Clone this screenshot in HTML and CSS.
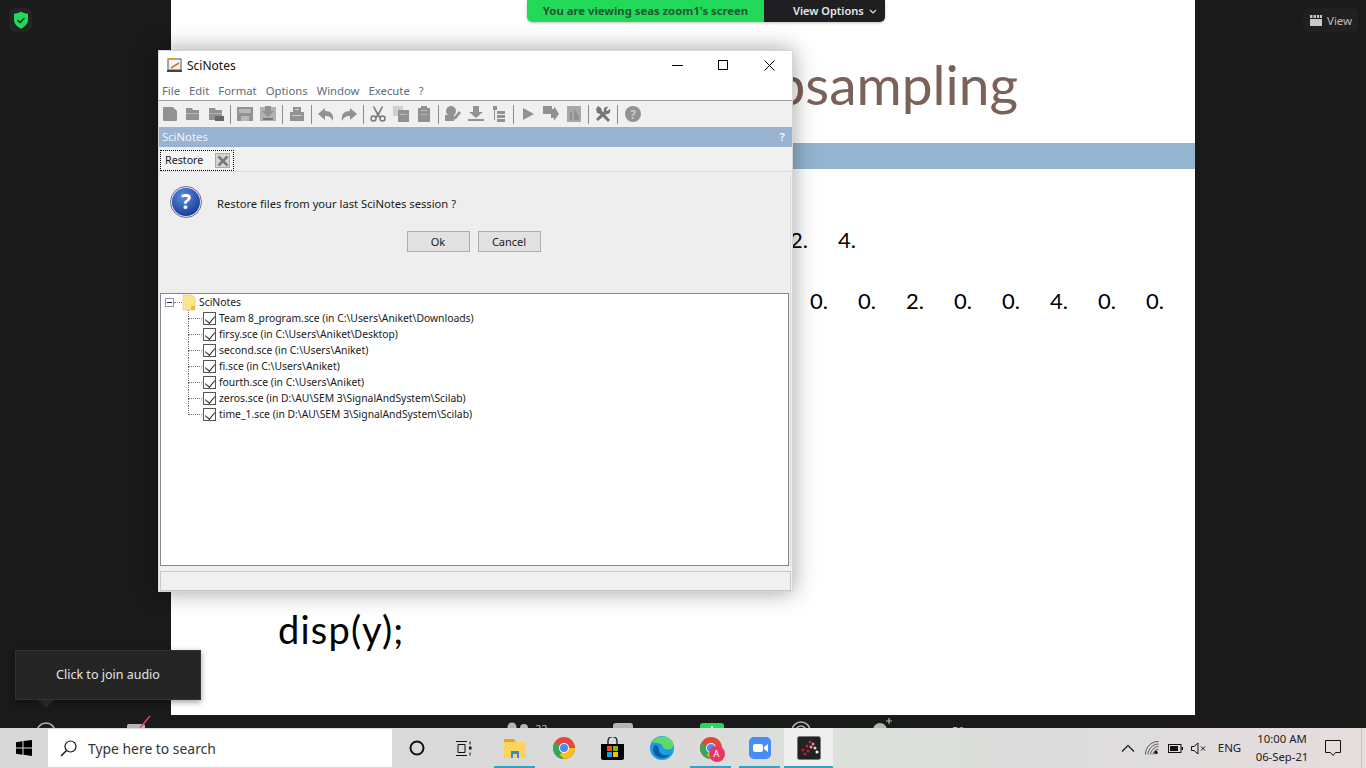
FILE: index.html
```html
<!DOCTYPE html>
<html lang="en">
<head>
  <meta charset="UTF-8">
  <title>SciNotes - Zoom screen share</title>
  <link rel="stylesheet" href="styles.css">
</head>
<body>
  <div class="screen">
    <div class="slide">
      <div class="slide-title">Upsampling</div>
      <div class="slide-band"></div>
      <div class="values values-first"><span>2.</span><span>4.</span></div>
      <div class="values values-second">
        <span>0.</span><span>0.</span><span>2.</span><span>0.</span><span>0.</span><span>4.</span><span>0.</span><span>0.</span>
      </div>
      <div class="slide-code">disp(y);</div>
    </div>

    <svg class="zoom-strip" width="1366" height="13" viewBox="0 0 1366 13">
      <circle cx="46" cy="17" r="9" fill="none" stroke="#b5b5b5" stroke-width="1.5"/>
      <rect x="127" y="9" width="18" height="8" rx="2" fill="#b5b5b5"/>
      <path d="M140 13 L150 1" stroke="#e5484d" stroke-width="1.5"/>
      <circle cx="512" cy="12" r="4.5" fill="#b5b5b5"/>
      <circle cx="524" cy="13" r="4" fill="#b5b5b5"/>
      <text x="535" y="18" class="zoom-count">22</text>
      <rect x="613" y="8" width="20" height="10" rx="3" fill="#b5b5b5"/>
      <rect x="700" y="8" width="24" height="10" rx="3" fill="#23d959"/>
      <rect x="711" y="11" width="2" height="3" fill="#fff"/>
      <circle cx="801" cy="16" r="9" fill="none" stroke="#b5b5b5" stroke-width="1.5"/>
      <circle cx="801" cy="16" r="5" fill="none" stroke="#b5b5b5" stroke-width="1.5"/>
      <circle cx="880" cy="15" r="7" fill="#b5b5b5"/>
      <path d="M889 3v6M886 6h6" stroke="#b5b5b5" stroke-width="1.2"/>
      <text x="952" y="20" class="zoom-count">50</text>
    </svg>

    <div class="top-banner">
      <div class="banner-status">You are viewing seas zoom1's screen</div>
      <div class="banner-options">View Options
        <svg width="8" height="5" viewBox="0 0 8 5"><path d="M1 1l3 3 3-3" fill="none" stroke="#ddd" stroke-width="1.2"/></svg>
      </div>
    </div>

    <div class="shield-tile">
      <svg width="16" height="18" viewBox="0 0 16 18">
        <path d="M8 0.5c2 1.5 4.500 2 7 2.200v6c0 4-3 7-7 9-4-2-7-5-7-9v-6c2.500-.2 5-.7 7-2.200z" fill="#23d959"/>
        <path d="M4.500 9l2.500 2.500 4.500-4.500" fill="none" stroke="#1c3a26" stroke-width="1.700"/>
      </svg>
    </div>

    <div class="view-button">
      <svg width="12" height="11" viewBox="0 0 12 11"><path d="M0 4h12v7H0zM0 0h2.500v3H0zM3.500 0h2.500v3H3.500zM7 0h2.200v3H7zM10 0h2v3h-2z" fill="#c8c8c8"/></svg>
      View
    </div>

    <div class="tooltip">Click to join audio</div>

    <div class="window">
      <div class="title-bar">
        <svg class="app-icon" width="16" height="16" viewBox="0 0 16 16">
          <rect x="1" y="2" width="13" height="11" fill="#f4f4f4" stroke="#555"/>
          <rect x="1" y="1" width="8" height="2" fill="#d9a520"/>
          <rect x="0" y="13" width="15" height="2" fill="#444"/>
          <path d="M4 11l8-5" stroke="#d9731a" stroke-width="1.500"/>
        </svg>
        <span class="title-text">SciNotes</span>
        <div class="window-controls">
          <svg width="11" height="11" viewBox="0 0 11 11"><path d="M0 5.500h11" stroke="#000"/></svg>
          <svg width="11" height="11" viewBox="0 0 11 11"><rect x=".5" y=".5" width="9" height="9" fill="none" stroke="#000"/></svg>
          <svg width="11" height="11" viewBox="0 0 11 11"><path d="M.5.500l10 10M10.500.500l-10 10" stroke="#000"/></svg>
        </div>
      </div>

      <div class="menu-bar">
        <span>File</span><span>Edit</span><span>Format</span><span>Options</span><span>Window</span><span>Execute</span><span>?</span>
      </div>

      <div class="tool-bar">
        <div class="tool"><svg viewBox="0 0 16 16"><path d="M1 2a1 1 0 0 1 1-1h9l4 4v9a1 1 0 0 1-1 1H2a1 1 0 0 1-1-1z"/></svg></div>
        <div class="tool"><svg viewBox="0 0 16 16"><path d="M1 2h6l1 2h6v10H1z"/><rect x="1" y="7" width="13" height="1" fill="#b4b4b4"/></svg></div>
        <div class="tool"><svg viewBox="0 0 16 16"><path d="M1 2h6l1 2h6v10H1z"/><rect x="1" y="7" width="13" height="1" fill="#b4b4b4"/><rect x="7" y="10" width="9" height="5" fill="#666"/></svg></div>
        <div class="tool-sep"></div>
        <div class="tool"><svg viewBox="0 0 16 16"><path d="M0 1h16v14H0z"/><rect x="2" y="3" width="12" height="4" fill="#b8b8b8"/><rect x="4" y="10" width="8" height="5" fill="#b8b8b8"/></svg></div>
        <div class="tool"><svg viewBox="0 0 16 16"><path d="M0 1h16v14H0z" fill="#b0b0b0"/><path d="M5 0h6v5h3l-6 6-6-6h3z"/><rect x="3" y="12" width="10" height="2" fill="#777"/></svg></div>
        <div class="tool-sep"></div>
        <div class="tool"><svg viewBox="0 0 16 16"><path d="M4 1h8v5h3v9H1V6h3z"/><rect x="6" y="3" width="4" height="1" fill="#ccc"/><rect x="3" y="9" width="10" height="1" fill="#ccc"/></svg></div>
        <div class="tool-sep"></div>
        <div class="tool"><svg viewBox="0 0 16 16"><path d="M7 2L0 8l7 6v-4c4 0 6 1 8 5 1-7-2-10-8-10z"/></svg></div>
        <div class="tool"><svg viewBox="0 0 16 16"><path d="M9 2l7 6-7 6v-4c-4 0-6 1-8 5-1-7 2-10 8-10z"/></svg></div>
        <div class="tool-sep"></div>
        <div class="tool"><svg viewBox="0 0 16 16"><path d="M4 0l4 7 4-7 1 1-4 8 2 2-2 1-1-2-1 2-2-1 2-2-4-8z" fill="#777"/><circle cx="3.500" cy="12.500" r="2.500" fill="none" stroke="#777" stroke-width="1.500"/><circle cx="12.500" cy="12.500" r="2.500" fill="none" stroke="#777" stroke-width="1.500"/></svg></div>
        <div class="tool"><svg viewBox="0 0 16 16"><rect x="0" y="0" width="10" height="10" fill="#d0d0d0"/><rect x="5" y="4" width="11" height="12"/><rect x="7" y="8" width="7" height="1" fill="#bbb"/></svg></div>
        <div class="tool"><svg viewBox="0 0 16 16"><path d="M2 2h3V0h6v2h3v14H2z"/><rect x="5" y="4" width="6" height="1" fill="#bbb"/><rect x="5" y="8" width="6" height="1" fill="#bbb"/></svg></div>
        <div class="tool-sep"></div>
        <div class="tool"><svg viewBox="0 0 16 16"><circle cx="6" cy="5" r="5"/><path d="M0 9h9v6H0zM9 11l5-6 2 2-5 6-3 1z"/></svg></div>
        <div class="tool"><svg viewBox="0 0 16 16"><path d="M5 0h6v6h4l-7 6-7-6h4zM0 13h16v2H0z"/></svg></div>
        <div class="tool"><svg viewBox="0 0 16 16"><path d="M2 0h4v4H2zM3 4h1v10H3zM6 5h8v3H6zM6 9h8v3H6zM6 13h8v3H6z"/></svg></div>
        <div class="tool-sep"></div>
        <div class="tool"><svg viewBox="0 0 16 16"><path d="M3 2l11 6-11 6z"/></svg></div>
        <div class="tool"><svg viewBox="0 0 16 16"><path d="M0 0h9v3h2V0l5 8-5 7v-3H8V8H0z"/></svg></div>
        <div class="tool"><svg viewBox="0 0 16 16"><path d="M1 0h14v16H1z" fill="#a8a8a8"/><path d="M4 14V6h2v8zM8 14V3l5 7v4z"/></svg></div>
        <div class="tool-sep"></div>
        <div class="tool"><svg viewBox="0 0 16 16"><path d="M1 3l2-3 3 2 1 3 8 9-2 2-8-8-3-1z" fill="#777"/><path d="M15 3l-3 2-1-1 2-3c-2-1-5 1-4 4L1 13l2 2 8-7c3 1 5-2 4-5z" fill="#777"/></svg></div>
        <div class="tool-sep tool-sep-wide"></div>
        <div class="tool"><svg viewBox="0 0 16 16"><circle cx="8" cy="8" r="8"/><text x="8" y="12.500" class="help-mark">?</text></svg></div>
      </div>

      <div class="dock-header"><span>SciNotes</span><span class="dock-help">?</span></div>

      <div class="tab-strip">
        <div class="tab">
          <span class="tab-label">Restore</span>
          <span class="tab-close">
            <svg width="12" height="12" viewBox="0 0 12 12"><path d="M1.500 1.500l9 9M10.500 1.500l-9 9" stroke="#777" stroke-width="2.500"/></svg>
          </span>
        </div>
      </div>

      <div class="panel">
        <div class="prompt">
          <div class="question-icon">?</div>
          <span class="prompt-text">Restore files from your last SciNotes session ?</span>
        </div>
        <div class="prompt-actions">
          <button class="btn">Ok</button>
          <button class="btn">Cancel</button>
        </div>

        <div class="tree">
          <div class="tree-root">
            <span class="tree-handle"></span>
            <span class="tree-dash"></span>
            <svg class="folder" width="14" height="17" viewBox="0 0 14 17">
              <path d="M1 1h9l3 3v12H1z" fill="#fde58f" stroke="#e8c860" stroke-width=".6"/>
              <rect x="9" y="12" width="4" height="4" fill="#f3b93c"/>
            </svg>
            <span>SciNotes</span>
          </div>
          <div class="tree-row"><span class="check"></span>Team 8_program.sce (in C:\Users\Aniket\Downloads)</div>
          <div class="tree-row"><span class="check"></span>firsy.sce (in C:\Users\Aniket\Desktop)</div>
          <div class="tree-row"><span class="check"></span>second.sce (in C:\Users\Aniket)</div>
          <div class="tree-row"><span class="check"></span>fi.sce (in C:\Users\Aniket)</div>
          <div class="tree-row"><span class="check"></span>fourth.sce (in C:\Users\Aniket)</div>
          <div class="tree-row"><span class="check"></span>zeros.sce (in D:\AU\SEM 3\SignalAndSystem\Scilab)</div>
          <div class="tree-row tree-last"><span class="check"></span>time_1.sce (in D:\AU\SEM 3\SignalAndSystem\Scilab)</div>
        </div>
      </div>

      <div class="status-bar"></div>
    </div>
  </div>

  <div class="taskbar">
    <div class="start">
      <svg width="16" height="16" viewBox="0 0 16 16"><path d="M0 2.300l6.500-1v6.300H0zM7.500 1.100L16 0v7.600H7.500zM0 8.500h6.500v6.200l-6.500-1zM7.500 8.500H16V16l-8.500-1.200z" fill="#000"/></svg>
    </div>
    <div class="search">
      <svg width="17" height="17" viewBox="0 0 17 17"><circle cx="10.500" cy="6.500" r="5.500" fill="none" stroke="#111" stroke-width="1.200"/><path d="M6.500 10.500L1 16" stroke="#111" stroke-width="1.400"/></svg>
      <span>Type here to search</span>
    </div>

    <div class="task-icon">
      <svg width="16" height="16" viewBox="0 0 16 16"><circle cx="8" cy="8" r="6.500" fill="none" stroke="#111" stroke-width="2"/></svg>
    </div>
    <div class="task-icon task-view">
      <svg width="17" height="15" viewBox="0 0 17 15"><path d="M1 .5h11M1 14.500h11M3 3.500h7v8H3zM15 .5v3M15 11.500v3" fill="none" stroke="#111"/><rect x="14" y="5.500" width="2.500" height="3" fill="#111"/></svg>
    </div>
    <div class="task-icon running">
      <svg width="22" height="19" viewBox="0 0 22 19">
        <path d="M0 0h10l2 3H0z" fill="#e8a61f"/>
        <rect x="0" y="3" width="22" height="16" fill="#fbd35f"/>
        <path d="M7 19v-7h8v7h-2v-4H9v4z" fill="#2f8fd0"/>
      </svg>
    </div>
    <div class="task-icon">
      <svg width="22" height="22" viewBox="0 0 22 22">
        <circle cx="11" cy="11" r="11" fill="#e8453c"/>
        <path d="M1.500 5.500A11 11 0 0 0 11 22 11 11 0 0 0 22 11H11z" fill="#34a853"/>
        <path d="M11 11h11a11 11 0 0 1-11 11l-4-4z" fill="#fbc116"/>
        <circle cx="11" cy="11" r="5" fill="#fff"/>
        <circle cx="11" cy="11" r="4" fill="#4a8af4"/>
      </svg>
    </div>
    <div class="task-icon">
      <svg width="23" height="23" viewBox="0 0 23 23">
        <path d="M0 7h23v14a2 2 0 0 1-2 2H2a2 2 0 0 1-2-2z" fill="#000"/>
        <path d="M7 7V4a4.500 4.500 0 0 1 9 0v3" fill="none" stroke="#111" stroke-width="1.300"/>
        <rect x="6" y="9" width="5" height="5" fill="#f25022"/>
        <rect x="12" y="9" width="5" height="5" fill="#7fba00"/>
        <rect x="6" y="15" width="5" height="5" fill="#00a4ef"/>
        <rect x="12" y="15" width="5" height="5" fill="#ffb900"/>
      </svg>
    </div>
    <div class="task-icon">
      <svg width="24" height="24" viewBox="0 0 24 24">
        <circle cx="12" cy="12" r="12" fill="#1b9de2"/>
        <path d="M2 7C5 0 15-2 21 4c3 3 3 8 0 9-3 1-8 0-8-2 0-3-5-5-11-4z" fill="#5fd86e"/>
        <path d="M9 14c0 4 5 7 11 4-3 4-8 5-12 3-4-2-6-7-4-11 1-2 5-1 5 4z" fill="#0c59a4"/>
      </svg>
    </div>
    <div class="task-icon running">
      <span class="chrome-badged">
        <svg width="22" height="22" viewBox="0 0 22 22">
          <circle cx="11" cy="11" r="11" fill="#e8453c"/>
          <path d="M1.500 5.500A11 11 0 0 0 11 22 11 11 0 0 0 22 11H11z" fill="#34a853"/>
          <path d="M11 11h11a11 11 0 0 1-11 11l-4-4z" fill="#fbc116"/>
          <circle cx="11" cy="11" r="5" fill="#fff"/>
          <circle cx="11" cy="11" r="4" fill="#4a8af4"/>
        </svg>
        <span class="profile-badge">A</span>
      </span>
    </div>
    <div class="task-icon running">
      <svg width="22" height="22" viewBox="0 0 22 22">
        <rect width="22" height="22" rx="5" fill="#4a8cf7"/>
        <rect x="4" y="7" width="10" height="8" rx="2" fill="#fff"/>
        <path d="M15 10l4-3v8l-4-3z" fill="#fff"/>
      </svg>
    </div>
    <div class="task-icon running active">
      <svg width="24" height="24" viewBox="0 0 24 24">
        <rect x=".5" y=".5" width="23" height="23" rx="2" fill="#222" stroke="#777"/>
        <circle cx="13" cy="6" r="1.300" fill="#c4304a"/><circle cx="16" cy="8" r="1.500" fill="#e88"/>
        <circle cx="10" cy="10" r="1.500" fill="#c01f35"/><circle cx="14" cy="11" r="1.500" fill="#e9a"/>
        <circle cx="18" cy="12" r="1.500" fill="#f3c9d0"/><circle cx="6" cy="14" r="1.500" fill="#c01f35"/>
        <circle cx="11" cy="15" r="1.500" fill="#c01f35"/><circle cx="20" cy="16" r="1.500" fill="#fff"/>
        <circle cx="8" cy="18" r="1.500" fill="#c01f35"/>
      </svg>
    </div>

    <div class="tray">
      <div class="tray-item wide">
        <svg width="14" height="8" viewBox="0 0 14 8"><path d="M1 7.500l6-6 6 6" fill="none" stroke="#111" stroke-width="1.100"/></svg>
      </div>
      <div class="tray-item wide">
        <svg width="14" height="14" viewBox="0 0 14 14"><g fill="none" stroke="#555"><path d="M.5 13.500C.5 6 6 .5 13.500.5"/><path d="M3 13.500C3 8 8 3 13.500 3"/><path d="M5.500 13.500C5.500 10 9.500 5.500 13.500 5.500"/><path d="M8 13.500c0-2 2-5 5.500-5"/></g><circle cx="11" cy="11.500" r="1.700" fill="#111"/></svg>
      </div>
      <div class="tray-item">
        <svg width="15" height="9" viewBox="0 0 15 9"><rect x=".5" y=".5" width="12.500" height="8" fill="none" stroke="#111"/><rect x="2" y="2" width="8" height="5" fill="#111"/><rect x="13.500" y="3" width="1.500" height="3" fill="#111"/></svg>
      </div>
      <div class="tray-item">
        <svg width="15" height="13" viewBox="0 0 15 13"><path d="M.5 4.500h2.500L7 1v11L3 8.500H.5z" fill="none" stroke="#111"/><path d="M10 4.500l4 4M14 4.500l-4 4" stroke="#111"/></svg>
      </div>
      <div class="tray-lang">ENG</div>
      <div class="tray-clock"><span>10:00 AM</span><span>06-Sep-21</span></div>
      <div class="tray-notify">
        <svg width="16" height="16" viewBox="0 0 16 16"><path d="M.5.500h15v12h-5l-2.500 3-2.500-3h-5z" fill="none" stroke="#111"/></svg>
      </div>
      <div class="show-desktop"></div>
    </div>
  </div>
</body>
</html>
```

FILE: styles.css
```css
* {
  box-sizing: border-box;
}

html, body {
  margin: 0;
  padding: 0;
}

body {
  width: 1366px;
  height: 768px;
  overflow: hidden;
  background-color: #1a1a1a;
  font-family: "Noto Sans", "Open Sans", sans-serif;
}

.screen {
  position: relative;
  height: 728px;
  overflow: hidden;
}

/* shared slide */
.slide {
  width: 1024px;
  height: 715px;
  margin-left: 171px;
  background-color: #fff;
  font-family: Lato, sans-serif;
  color: #000;
}

.slide-title {
  height: 143px;
  padding: 54px 177px 0 0;
  font-size: 55px;
  line-height: 60px;
  text-align: right;
  color: #7a6259;
}

.slide-band {
  height: 26px;
  background-color: #94b4d0;
}

.values {
  display: flex;
  height: 30px;
  font-size: 22px;
  line-height: 30px;
}

.values span {
  width: 48px;
}

.values-first {
  margin: 56px 0 0 619px;
}

.values-second {
  margin: 31px 0 0 639px;
}

.slide-code {
  margin: 288px 0 0 107px;
  font-size: 38px;
  letter-spacing: 1.2px;
  line-height: 50px;
}

.zoom-strip {
  display: block;
}

.zoom-count {
  font-size: 11px;
  fill: #b5b5b5;
}

/* zoom overlays */
.top-banner {
  position: absolute;
  top: 0;
  left: 527px;
  display: flex;
  width: 358px;
  height: 22px;
  overflow: hidden;
  border-radius: 0 0 5px 5px;
  font-size: 11.3px;
  font-weight: 700;
  line-height: 22px;
  box-shadow: 0 1px 3px rgba(0, 0, 0, 0.25);
}

.banner-status {
  width: 237px;
  background-color: #23d959;
  color: #1e5a33;
  text-align: center;
}

.banner-options {
  display: flex;
  flex: 1;
  align-items: center;
  gap: 5px;
  padding-left: 29px;
  background-color: #1f1f22;
  color: #e8e8e8;
  font-size: 11px;
  font-weight: 600;
}

.shield-tile {
  position: absolute;
  top: 8px;
  left: 9px;
  display: flex;
  align-items: center;
  justify-content: center;
  width: 23px;
  height: 24px;
  border-radius: 6px;
  background-color: #242424;
}

.view-button {
  position: absolute;
  top: 8px;
  left: 1303px;
  display: flex;
  align-items: center;
  gap: 5px;
  width: 55px;
  height: 24px;
  padding-left: 7px;
  border-radius: 6px;
  background-color: #202020;
  color: #bdbdbd;
  font-size: 11.5px;
}

.tooltip {
  position: absolute;
  top: 650px;
  left: 15px;
  width: 186px;
  height: 50px;
  border: 1px solid #333;
  background-color: #252525;
  color: #e4e4e4;
  font-size: 12.5px;
  line-height: 47px;
  text-align: center;
  box-shadow: 0 2px 6px rgba(0, 0, 0, 0.4);
}

.tooltip::after {
  content: "";
  position: absolute;
  top: 49px;
  left: 22px;
  border-top: 8px solid #252525;
  border-left: 8px solid transparent;
  border-right: 8px solid transparent;
}

/* scinotes window */
.window {
  position: absolute;
  top: 50px;
  left: 158px;
  display: flex;
  flex-direction: column;
  width: 635px;
  height: 542px;
  border: 1px solid #d6d6d6;
  background-color: #f0f0f0;
  color: #1a1a1a;
  box-shadow: 0 0 22px rgba(0, 0, 0, 0.38);
}

.title-bar {
  display: flex;
  align-items: center;
  height: 30px;
  padding: 0 0 2px 8px;
  background-color: #fff;
}

.title-text {
  margin-left: 4px;
  font-size: 12px;
  color: #111;
}

.window-controls {
  display: flex;
  gap: 35px;
  margin-left: auto;
  padding-right: 17px;
}

.menu-bar {
  display: flex;
  gap: 9px;
  height: 20px;
  padding-left: 3px;
  border-bottom: 1px solid #a0a0a0;
  background-color: #fff;
  color: #616c78;
  font-size: 11.3px;
  line-height: 19px;
}

.tool-bar {
  display: flex;
  align-items: center;
  height: 26px;
  margin-left: -1px;
}

.tool {
  display: flex;
  align-items: center;
  justify-content: center;
  width: 23px;
  height: 20px;
}

.tool svg {
  width: 16px;
  height: 16px;
  fill: #929292;
}

.tool-sep {
  width: 1px;
  height: 19px;
  margin: 0 2.5px;
  background-color: #8c8c8c;
}

.tool-sep-wide {
  margin: 0 3px;
}

.help-mark {
  fill: #c8c8c8;
  font-size: 12px;
  font-weight: 700;
  text-anchor: middle;
}

.dock-header {
  display: flex;
  justify-content: space-between;
  height: 20px;
  padding: 0 7px 0 3px;
  background-color: #9ab3d0;
  color: #eef2f7;
  font-size: 11.3px;
  line-height: 20px;
}

.dock-help {
  font-weight: 700;
}

.tab-strip {
  height: 25px;
  padding: 3px 0 0 1px;
  border-bottom: 1px solid #dcdcdc;
}

.tab {
  display: flex;
  align-items: center;
  justify-content: space-between;
  width: 74px;
  height: 21px;
  padding: 0 3px 2px 4px;
  border: 1px dotted #000;
  background-color: #f4f4f4;
  font-size: 10.7px;
}

.tab-close {
  display: flex;
  align-items: center;
  justify-content: center;
  width: 15px;
  height: 15px;
  margin-top: 2px;
  border: 1px solid #aaa;
  background-color: #d4d4d4;
}

.panel {
  display: flex;
  flex: 1;
  flex-direction: column;
  margin: 3px 1px 0 1px;
  padding-right: 1px;
  border-right: 1px solid #dcdcdc;
  background-color: #eee;
}

.prompt {
  display: flex;
  align-items: center;
  gap: 15px;
  padding: 11px 0 0 10px;
  font-size: 11.2px;
}

.prompt-text {
  padding-top: 2px;
}

.question-icon {
  width: 32px;
  height: 32px;
  border: 2px solid #e4e8ee;
  border-radius: 50%;
  outline: 1px solid #6d7686;
  outline-offset: -1px;
  background: radial-gradient(circle at 40% 30%, #5c8be0, #1b3f9c 75%);
  color: #fff;
  font-size: 21px;
  font-weight: 700;
  line-height: 27px;
  text-align: center;
}

.prompt-actions {
  display: flex;
  justify-content: center;
  gap: 8px;
  margin-top: 13px;
  padding-right: 2px;
}

.btn {
  width: 63px;
  height: 21px;
  padding: 0;
  border: 1px solid #adadad;
  background-color: #e1e1e1;
  color: #1a1a1a;
  font-family: inherit;
  font-size: 11px;
}

.tree {
  height: 273px;
  margin-top: 41px;
  padding: 0 0 0 4px;
  border: 1px solid #828790;
  background-color: #fff;
  font-size: 10.35px;
  color: #1a1a1a;
}

.tree-root {
  display: flex;
  align-items: center;
  height: 16px;
}

.tree-handle {
  position: relative;
  width: 9px;
  height: 9px;
  border: 1px solid #8a99ac;
}

.tree-handle::after {
  content: "";
  position: absolute;
  top: 3px;
  left: 1px;
  width: 5px;
  height: 1px;
  background-color: #223;
}

.tree-dash {
  width: 8px;
  border-top: 1px dotted #777;
}

.folder {
  margin-right: 3px;
}

.tree-row {
  position: relative;
  display: flex;
  align-items: center;
  height: 16px;
  padding-left: 38px;
}

.tree-row::before {
  content: "";
  position: absolute;
  top: 0;
  left: 23px;
  width: 13px;
  height: 8px;
  border-bottom: 1px dotted #777;
  border-left: 1px dotted #777;
}

.tree-row:not(.tree-last)::after {
  content: "";
  position: absolute;
  top: 8px;
  left: 23px;
  height: 8px;
  border-left: 1px dotted #777;
}

.check {
  position: relative;
  width: 13px;
  height: 13px;
  margin-right: 3px;
  border: 1px solid #555;
  background-color: #fff;
}

.check::after {
  content: "";
  position: absolute;
  top: 1px;
  left: 3px;
  width: 5px;
  height: 8px;
  border-right: 1.5px solid #333;
  border-bottom: 1.5px solid #333;
  transform: rotate(40deg);
}

.status-bar {
  height: 20px;
  margin: 4px 1px 0 1px;
  border: 1px solid #c8c8c8;
  background-color: #f0f0f0;
}

/* windows taskbar */
.taskbar {
  display: flex;
  height: 40px;
  background: linear-gradient(90deg, #d8d8d8 0%, #dadada 50%, #dbe2da 60%, #dcdcdc 75%, #e6dcdc 100%);
}

.start {
  display: flex;
  align-items: center;
  justify-content: center;
  width: 48px;
}

.search {
  display: flex;
  align-items: center;
  gap: 11px;
  width: 344px;
  height: 38px;
  margin-top: 1px;
  padding-left: 12px;
  background-color: #fff;
  color: #333;
  font-size: 13.9px;
}

.task-icon {
  position: relative;
  display: flex;
  align-items: center;
  justify-content: center;
  width: 49px;
}

.task-view svg {
  margin-right: 5px;
}

.running::after {
  content: "";
  position: absolute;
  right: 4px;
  bottom: 0;
  left: 4px;
  height: 2px;
  background-color: #2ea3c7;
}

.active {
  background-color: #efefef;
}

.active::after {
  right: 0;
  left: 0;
}

.chrome-badged {
  position: relative;
  display: block;
  width: 22px;
  height: 22px;
}

.profile-badge {
  position: absolute;
  top: 9px;
  left: 9px;
  width: 16px;
  height: 16px;
  border-radius: 50%;
  background-color: #e8366b;
  color: #fff;
  font-size: 9px;
  line-height: 16px;
  text-align: center;
}

.tray {
  display: flex;
  margin-left: auto;
  color: #222;
}

.tray-item {
  display: flex;
  align-items: center;
  justify-content: center;
  width: 23px;
}

.tray-item.wide {
  width: 24px;
}

.tray-lang {
  width: 37px;
  padding-left: 2px;
  font-size: 11.5px;
  line-height: 40px;
  text-align: center;
}

.tray-clock {
  display: flex;
  flex-direction: column;
  justify-content: center;
  width: 70px;
  font-size: 11.3px;
  line-height: 18px;
  text-align: center;
}

.tray-notify {
  display: flex;
  align-items: center;
  justify-content: center;
  width: 32px;
}

.show-desktop {
  width: 5px;
  margin-left: 12px;
  border-left: 1px solid #c8c0c0;
}
```
